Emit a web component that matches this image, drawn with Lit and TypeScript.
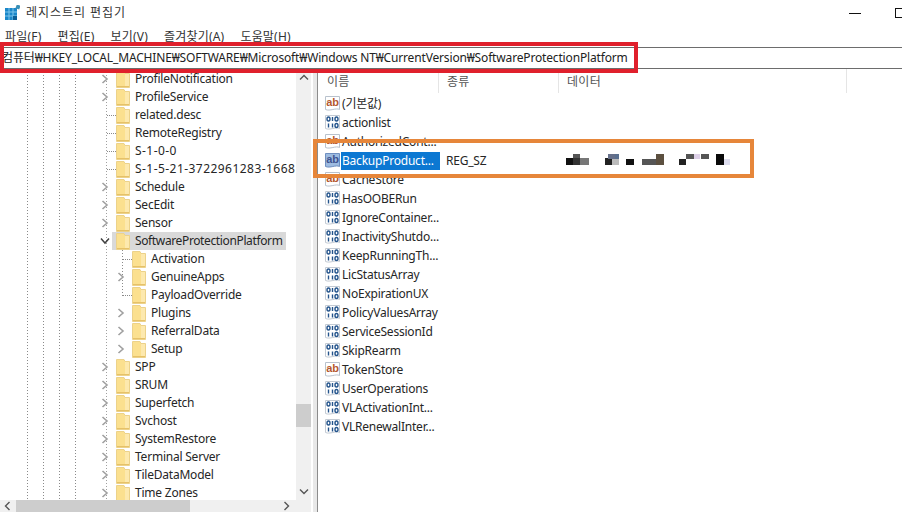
import { LitElement, html, css, svg } from "lit";
import { customElement } from "lit/decorators.js";
import { classMap } from "lit/directives/class-map.js";

type TreeRow = { name: string; kind: "closed" | "leaf"; wide?: boolean };
const before: TreeRow[] = [
  { name: "ProfileNotification", kind: "closed" },
  { name: "ProfileService", kind: "closed" },
  { name: "related.desc", kind: "leaf" },
  { name: "RemoteRegistry", kind: "leaf" },
  { name: "S-1-0-0", kind: "leaf", wide: true },
  { name: "S-1-5-21-3722961283-1668", kind: "leaf", wide: true },
  { name: "Schedule", kind: "closed" },
  { name: "SecEdit", kind: "closed" },
  { name: "Sensor", kind: "closed" },
];
const children: TreeRow[] = [
  { name: "Activation", kind: "leaf" },
  { name: "GenuineApps", kind: "closed" },
  { name: "PayloadOverride", kind: "leaf" },
  { name: "Plugins", kind: "closed" },
  { name: "ReferralData", kind: "closed" },
  { name: "Setup", kind: "closed" },
];
const after = ["SPP", "SRUM", "Superfetch", "Svchost", "SystemRestore", "Terminal Server", "TileDataModel", "Time Zones"];

const values: { name: string; icon: "ab" | "bin" }[] = [
  { name: "(기본값)", icon: "ab" },
  { name: "actionlist", icon: "bin" },
  { name: "AuthorizedCont...", icon: "ab" },
  { name: "BackupProduct...", icon: "ab" },
  { name: "CacheStore", icon: "ab" },
  { name: "HasOOBERun", icon: "bin" },
  { name: "IgnoreContainer...", icon: "bin" },
  { name: "InactivityShutdo...", icon: "bin" },
  { name: "KeepRunningTh...", icon: "bin" },
  { name: "LicStatusArray", icon: "bin" },
  { name: "NoExpirationUX", icon: "bin" },
  { name: "PolicyValuesArray", icon: "bin" },
  { name: "ServiceSessionId", icon: "bin" },
  { name: "SkipRearm", icon: "bin" },
  { name: "TokenStore", icon: "ab" },
  { name: "UserOperations", icon: "bin" },
  { name: "VLActivationInt...", icon: "bin" },
  { name: "VLRenewalInter...", icon: "bin" },
];

const mosaic: [number, number, number, number, string][] = [
  [0, 4, 8, 7, "#111"], [7, 0, 7, 4, "#555"], [7, 4, 7, 7, "#333"], [14, 4, 9, 7, "#777"],
  [39, 4, 7, 7, "#222"], [42, 0, 7, 5, "#66708a"], [49, 0, 4, 5, "#5a7090"], [46, 5, 7, 6, "#bbb"],
  [60, 5, 8, 6, "#111"], [76, 5, 14, 6, "#555"], [90, 0, 8, 11, "#5c5040"],
  [113, 5, 7, 6, "#222"], [120, 0, 8, 5, "#555"], [128, 0, 6, 5, "#ddd0e8"], [135, 0, 8, 5, "#555"],
  [150, 0, 8, 11, "#0a0a0a"], [158, 5, 6, 6, "#dde"],
];

const folder = svg`<svg class="folder" width="14" height="17" viewBox="0 0 14 17">
  <path d="M.5 .5H8L9 2.5H13.5V16.5H.5Z" fill="#fbe08f" stroke="#ecd28a"/>
  <path d="M9 3V16H13V3Z" fill="#fde9ae"/>
  <path d="M1 15.5H13" stroke="#e6c168"/>
</svg>`;
const chevron = svg`<svg width="8" height="10" viewBox="0 0 8 10"><path d="M1.5 1L6 5 1.5 9" fill="none" stroke="#a0a0a0" stroke-width="1.6"/></svg>`;
const chevronOpen = svg`<svg width="10" height="8" viewBox="0 0 10 8"><path d="M1 1.5L5 6 9 1.5" fill="none" stroke="#404040" stroke-width="1.5"/></svg>`;
const abIcon = svg`<svg width="17" height="17" viewBox="0 0 17 17">
  <path d="M1.5 1.5H15.5V14.5C12 12.5 6 16.5 1.5 14.5Z" fill="#fff" stroke="#b9c2cd"/>
  <text x="8.5" y="11" font-family="Liberation Sans" font-size="11" font-weight="700" fill="#b4582f" text-anchor="middle">ab</text>
</svg>`;
const abSel = svg`<svg width="17" height="17" viewBox="0 0 17 17">
  <path d="M1.5 1.5H15.5V14.5C12 12.5 6 16.5 1.5 14.5Z" fill="#9dbbe0" stroke="#6f8fc0"/>
  <text x="8.5" y="11" font-family="Liberation Sans" font-size="11" font-weight="700" fill="#40538f" text-anchor="middle">ab</text>
</svg>`;
const binIcon = svg`<svg width="17" height="17" viewBox="0 0 17 17">
  <path d="M1.5 1.5H15.5V14.5C12 12.5 6 16.5 1.5 14.5Z" fill="#fff" stroke="#c3cad3"/>
  <g fill="none" stroke="#24548c" stroke-width="1.4">
    <ellipse cx="4.5" cy="5" rx="1.5" ry="2"/><path d="M8.5 3V7"/><ellipse cx="12.5" cy="5" rx="1.5" ry="2"/>
    <path d="M4.5 9.5V13.5"/><path d="M8.5 9.5V13.5"/><ellipse cx="12.5" cy="11.5" rx="1.5" ry="2"/>
  </g>
</svg>`;
const appIcon = svg`<svg width="15" height="15" viewBox="0 0 15 15">
  <rect x="0" y="3" width="12" height="12" fill="#1b87c9"/>
  <path d="M4 3V15M8 3V15M0 7H12M0 11H12" stroke="#7cc4ea" stroke-width="1"/>
  <rect x="11" y="0" width="4" height="4" fill="#3a8fb5" transform="rotate(20 13 2)"/>
  <rect x="8" y="11" width="4" height="4" fill="#0b5e96"/>
</svg>`;

@customElement("app-root")
export class AppRoot extends LitElement {
  static styles = css`
    :host {
      display: block;
      width: 902px;
      height: 512px;
      overflow: hidden;
      position: relative;
      background: #fff;
      color: #262626;
      font: 12px/18px "Noto Sans", "Noto Sans CJK KR", sans-serif;
    }
    .title {
      height: 24px;
      display: flex;
      align-items: center;
      padding: 2px 0 0 5px;
      box-sizing: border-box;
      font-size: 12px;
      color: #333;
    }
    .title svg { margin-top: -1px; flex: none; }
    .title .label { flex: 1; letter-spacing: 0.95px; margin-left: 6px; }
    .min { width: 12px; height: 1px; background: #111; margin-right: 34px; }
    .max { width: 8px; height: 8px; border: 1px solid #111; margin-right: -3px; flex: none; }
    .menu {
      height: 23px;
      display: flex;
      gap: 16px;
      padding: 2px 0 0 5px;
      box-sizing: border-box;
      align-items: center;
      font-size: 12px;
      letter-spacing: 0.2px;
      color: #333;
    }
    .address {
      height: 20px;
      border-top: 1px solid #6d6d6d;
      border-bottom: 1px solid #6d6d6d;
      padding-left: 2px;
      line-height: 20px;
      font-size: 12px;
      letter-spacing: -0.16px;
      white-space: nowrap;
      color: #222;
    }
    .panes { display: flex; height: 443px; }
    .treepane { width: 311px; display: grid; grid-template-columns: 296px 15px; grid-template-rows: 431px 12px; flex: none; }
    .tree {
      overflow: hidden;
      padding-top: 1px;
      box-sizing: border-box;
      background-image:
        repeating-linear-gradient(#8a8a8a 0 1px, transparent 1px 3px),
        repeating-linear-gradient(#8a8a8a 0 1px, transparent 1px 3px),
        repeating-linear-gradient(#8a8a8a 0 1px, transparent 1px 3px),
        repeating-linear-gradient(#8a8a8a 0 1px, transparent 1px 3px),
        repeating-linear-gradient(#a0a0a0 0 1px, transparent 1px 3px);
      background-size: 1px 100%;
      background-repeat: no-repeat;
      background-position: 27px 0, 43px 0, 59px 0, 75px 0, 106px 0;
    }
    .row {
      height: 18px;
      display: flex;
      align-items: center;
      white-space: nowrap;
      letter-spacing: -0.22px;
    }
    .slot { width: 16px; margin-left: 97px; display: flex; justify-content: center; align-items: center; flex: none; height: 18px; }
    .slot.leaf { justify-content: flex-end; }
    .selbg { display: flex; align-items: center; background: #d9d9d9; height: 18px; width: 174px; letter-spacing: -0.37px; margin-left: -1px; padding-left: 1px; box-sizing: border-box; }
    .group {
      background-image: repeating-linear-gradient(#8a8a8a 0 1px, transparent 1px 3px);
      background-size: 1px 46px;
      background-repeat: no-repeat;
      background-position: 122px 0;
    }
    .group .slot { margin-left: 113px; }
    .folder { margin-left: 3px; flex: none; }
    .name { margin-left: 5px; }
    .name.wide { letter-spacing: 0.45px; }
    .conn { width: 9px; border-top: 1px dotted #8a8a8a; margin-right: -3px; flex: none; }
    .vbar { background: #f0f0f0; display: flex; flex-direction: column; align-items: center; justify-content: space-between; position: relative; padding: 5px 0; box-sizing: border-box; }
    .vthumb { position: absolute; left: 0; top: 335px; width: 15px; height: 23px; background: #cdcdcd; }
    .hbar { background: #f0f0f0; display: flex; align-items: center; justify-content: space-between; padding: 0 6px 0 4px; position: relative; box-sizing: border-box; }
    .hthumb { position: absolute; left: 16px; top: 0; width: 174px; height: 12px; background: #cdcdcd; }
    .corner { background: #f0f0f0; }
    .split { width: 7px; background: linear-gradient(90deg, #fff 0 2px, #e8e8e8 2px 6px, #8c8c8c 6px 7px); flex: none; }
    .listpane { flex: 1; padding-left: 6px; }
    .head { height: 25px; display: flex; }
    .head span { line-height: 26px; box-sizing: border-box; border-right: 1px solid #e5e5e5; height: 24px; color: #555; font-size: 12px; letter-spacing: 0.3px; }
    .h1 { width: 115px; padding-left: 3px; }
    .h2 { width: 120px; padding-left: 8px; }
    .h3 { width: 288px; padding-left: 8px; }
    .vrow { height: 19px; display: flex; align-items: center; white-space: nowrap; letter-spacing: -0.22px; }
    .vrow svg { flex: none; }
    .vname { padding-left: 1px; width: 99px; height: 18px; line-height: 18px; box-sizing: border-box; flex: none; }
    .vname.sel { background: #0c78d2; color: #fff; }
    .vtype { margin-left: 6px; width: 120px; flex: none; }
    .mosaic { filter: blur(0.4px); }
    .frame { position: absolute; box-sizing: border-box; pointer-events: none; }
    .red { left: 0; top: 42px; width: 638px; height: 31px; border: 4px solid #e0202c; }
    .orange { left: 313px; top: 139px; width: 441px; height: 39px; border: 4px solid #e6863a; }
  `;

  private treeRow(r: TreeRow) {
    return html`<div class="row">
      <span class=${classMap({ slot: true, leaf: r.kind === "leaf" })}>${r.kind === "closed" ? chevron : html`<span class="conn"></span>`}</span>
      ${folder}<span class=${classMap({ name: true, wide: !!r.wide })}>${r.name}</span>
    </div>`;
  }

  render() {
    return html`
      <div class="title">
        ${appIcon}<span class="label">레지스트리 편집기</span>
        <span class="min"></span>
        <span class="max"></span>
      </div>
      <div class="menu">
        <span>파일(F)</span><span>편집(E)</span><span>보기(V)</span><span>즐겨찾기(A)</span><span>도움말(H)</span>
      </div>
      <div class="address">컴퓨터₩HKEY_LOCAL_MACHINE₩SOFTWARE₩Microsoft₩Windows NT₩CurrentVersion₩SoftwareProtectionPlatform</div>
      <div class="panes">
        <div class="treepane">
          <div class="tree">
            ${before.map((r) => this.treeRow(r))}
            <div class="row">
              <span class="slot">${chevronOpen}</span>
              <span class="selbg">${folder}<span class="name">SoftwareProtectionPlatform</span></span>
            </div>
            <div class="group">${children.map((r) => this.treeRow(r))}</div>
            ${after.map((n) => this.treeRow({ name: n, kind: "closed" }))}
          </div>
          <div class="vbar">
            <svg width="10" height="7" viewBox="0 0 10 7"><path d="M1 5.5L5 1.5 9 5.5" fill="none" stroke="#555" stroke-width="1.4"/></svg>
            <div class="vthumb"></div>
            <svg width="10" height="7" viewBox="0 0 10 7"><path d="M1 1.5L5 5.5 9 1.5" fill="none" stroke="#555" stroke-width="1.4"/></svg>
          </div>
          <div class="hbar">
            <svg width="7" height="10" viewBox="0 0 7 10"><path d="M5.5 1L1.5 5 5.5 9" fill="none" stroke="#555" stroke-width="1.4"/></svg>
            <div class="hthumb"></div>
            <svg width="7" height="10" viewBox="0 0 7 10"><path d="M1.5 1L5.5 5 1.5 9" fill="none" stroke="#555" stroke-width="1.4"/></svg>
          </div>
          <div class="corner"></div>
        </div>
        <div class="split"></div>
        <div class="listpane">
          <div class="head"><span class="h1">이름</span><span class="h2">종류</span><span class="h3">데이터</span></div>
          ${values.map(
            (v, i) => html`<div class="vrow">
              ${i === 3 ? abSel : v.icon === "ab" ? abIcon : binIcon}
              <span class=${classMap({ vname: true, sel: i === 3 })}>${v.name}</span>
              ${i === 3
                ? html`<span class="vtype">REG_SZ</span>
                    <svg class="mosaic" width="170" height="14" viewBox="0 0 170 14">
                      ${mosaic.map(([x, y, w, h, c]) => svg`<rect x=${x} y=${y} width=${w} height=${h} fill=${c}/>`)}
                    </svg>`
                : ""}
            </div>`
          )}
        </div>
      </div>
      <div class="frame red"></div>
      <div class="frame orange"></div>
    `;
  }
}
